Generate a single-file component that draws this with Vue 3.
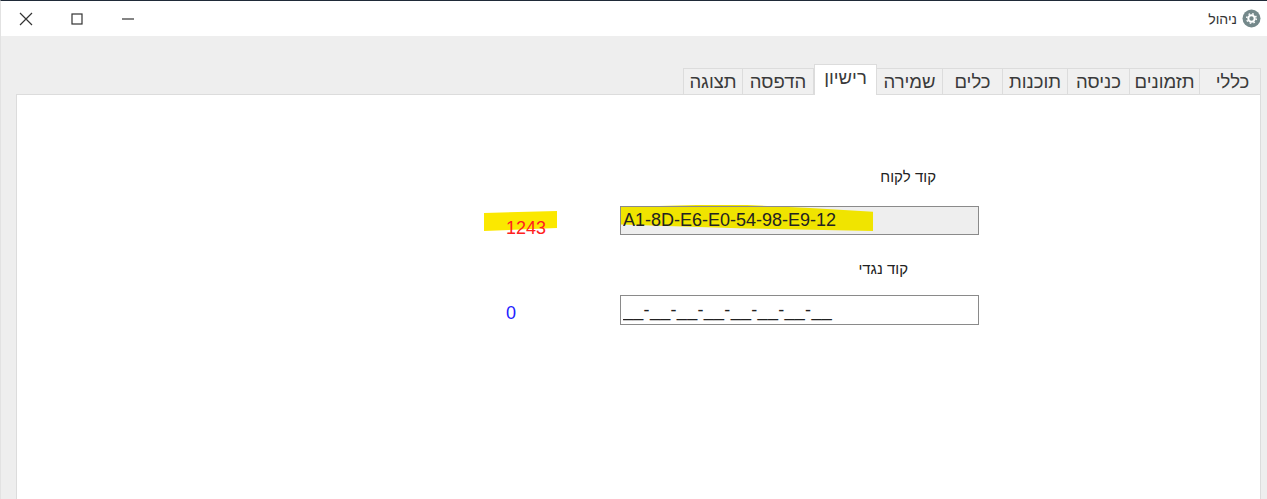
<script setup>
import { ref } from 'vue'

const tabs = [
  { label: 'כללי', width: 61 },
  { label: 'תזמונים', width: 70 },
  { label: 'כניסה', width: 62 },
  { label: 'תוכנות', width: 65 },
  { label: 'כלים', width: 60 },
  { label: 'שמירה', width: 66 },
  { label: 'רישיון', width: 63 },
  { label: 'הדפסה', width: 71 },
  { label: 'תצוגה', width: 60 }
]
const activeTab = ref('רישיון')

const customerCode = 'A1-8D-E6-E0-54-98-E9-12'
const counterCode = '__-__-__-__-__-__-__-__'
</script>

<template>
  <div class="window">
    <header class="titlebar">
      <div class="controls">
        <button class="ctl" aria-label="סגור">
          <svg width="14" height="14" viewBox="0 0 14 14"><path d="M1 1l12 12M13 1L1 13" stroke="#333" stroke-width="1.2" fill="none" /></svg>
        </button>
        <button class="ctl" aria-label="הגדל">
          <svg width="12" height="12" viewBox="0 0 12 12"><rect x="1" y="1" width="10" height="10" stroke="#333" stroke-width="1.2" fill="none" /></svg>
        </button>
        <button class="ctl" aria-label="מזער">
          <svg width="12" height="12" viewBox="0 0 12 12"><path d="M0 6h12" stroke="#333" stroke-width="1.2" fill="none" /></svg>
        </button>
      </div>
      <div class="app-title">
        <span>ניהול</span>
        <svg class="app-icon" width="19" height="19" viewBox="0 0 19 19">
          <circle cx="9.5" cy="9.5" r="9" fill="#74888a" />
          <circle cx="9.5" cy="9.5" r="3.2" fill="none" stroke="#fff" stroke-width="2" />
          <circle cx="9.5" cy="9.5" r="4.8" fill="none" stroke="#fff" stroke-width="1.4" stroke-dasharray="1.6 2.2" />
        </svg>
      </div>
    </header>

    <main class="content">
      <nav class="tabs" dir="rtl">
        <div
          v-for="tab in tabs"
          :key="tab.label"
          class="tab"
          :class="{ active: tab.label === activeTab }"
          :style="{ width: tab.width + 'px' }"
        >
          {{ tab.label }}
        </div>
      </nav>

      <section class="panel">
        <div class="form">
          <div class="label label-customer" dir="rtl">קוד לקוח</div>
          <div class="row">
            <span class="count count-red">
              <i class="marker marker-count"></i>
              1243
            </span>
            <span class="field-wrap field-wrap-readonly">
              <i class="marker marker-field"></i>
              <input class="field field-readonly" :value="customerCode" readonly />
            </span>
          </div>
          <div class="label label-counter" dir="rtl">קוד נגדי</div>
          <div class="row">
            <span class="count count-blue">0</span>
            <span class="field-wrap">
              <input class="field field-mask" :value="counterCode" />
            </span>
          </div>
        </div>
      </section>
    </main>
  </div>
</template>

<style scoped>
.window {
  height: 499px;
  display: flex;
  flex-direction: column;
  overflow: hidden;
  background: #eeeeee;
  border-top: 1px solid #1f2a38;
  border-left: 1px solid #e2e2e2;
  box-sizing: border-box;
  font-family: "Liberation Sans", Arial, sans-serif;
  color: #222;
}

.titlebar {
  height: 35px;
  flex: none;
  background: #fff;
  display: flex;
  align-items: center;
  justify-content: space-between;
  padding-right: 6px;
}

.controls {
  display: flex;
  margin-left: -1px;
}

.ctl {
  width: 51px;
  height: 35px;
  padding: 0;
  border: 0;
  background: none;
  display: flex;
  align-items: center;
  justify-content: center;
}

.app-title {
  display: flex;
  align-items: center;
  gap: 5px;
  font-size: 14px;
  color: #333;
}

.content {
  flex: 1;
  display: flex;
  flex-direction: column;
  padding: 28px 6px 0 15px;
  min-height: 0;
}

.tabs {
  display: flex;
  align-items: flex-end;
  height: 31px;
  position: relative;
  z-index: 1;
  margin-bottom: -1px;
}

.tab {
  box-sizing: border-box;
  height: 26px;
  margin-bottom: 1px;
  display: flex;
  align-items: center;
  justify-content: center;
  font-size: 18.5px;
  background: #f0f0f0;
  border: 1px solid #dcdcdc;
  border-bottom: 0;
  border-left-width: 0;
  color: #3a3a3a;
}

.tab:first-child {
  padding-left: 5px;
}

.tab:last-child {
  border-left-width: 1px;
}

.tab.active {
  height: 31px;
  margin-bottom: 0;
  background: #fff;
  padding-bottom: 4px;
  border-left-width: 1px;
}

.panel {
  flex: 1;
  background: #fff;
  border: 1px solid #dcdcdc;
  border-bottom: 0;
  padding-top: 72px;
}

.form {
  display: flex;
  flex-direction: column;
  margin-left: 489px;
}

.label {
  font-size: 15px;
  color: #222;
  line-height: 20px;
}

.label-customer {
  width: 430px;
  margin-bottom: 19px;
}

.label-counter {
  width: 402px;
  margin-top: 23px;
  margin-bottom: 16px;
}

.row {
  display: flex;
  align-items: flex-start;
  height: 30px;
}

.count {
  position: relative;
  isolation: isolate;
  flex: none;
  width: 114px;
  line-height: 20px;
  font-size: 18px;
}

.count-red {
  color: #ff2020;
  margin-top: 12px;
}

.count-blue {
  color: #2222ff;
  margin-top: 8px;
}

.field-wrap {
  position: relative;
  display: block;
  isolation: isolate;
}

.field-wrap-readonly {
  background: #eeeeee;
}

.field {
  display: block;
  position: relative;
  box-sizing: border-box;
  width: 359px;
  height: 30px;
  padding: 0 2px;
  border: 1px solid #8a8a8a;
  border-radius: 0;
  outline: 0;
  font: 18px "Liberation Sans", Arial, sans-serif;
  color: #222;
  background: #fff;
}

.field-mask {
  letter-spacing: 0.3px;
}

.field-readonly {
  height: 29px;
  background: transparent;
}

.marker {
  position: absolute;
  display: block;
}

.marker-count {
  left: -22px;
  top: -7px;
  width: 73px;
  height: 20px;
  z-index: -1;
  background: #fbe800;
  clip-path: polygon(0 10%, 100% 0, 100% 85%, 0 100%);
}

.marker-field {
  left: 1px;
  top: -1px;
  width: 252px;
  height: 26px;
  background: #f0e400;
  clip-path: polygon(0 8%, 30% 0, 50% 0, 75% 12%, 100% 26%, 100% 100%, 50% 90%, 15% 80%, 0 75%);
}
</style>
